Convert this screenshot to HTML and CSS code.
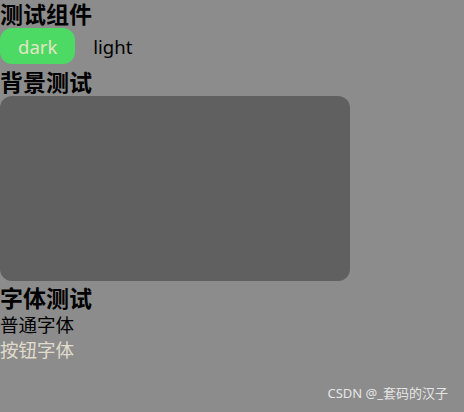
FILE: index.html
```html
<!DOCTYPE html>
<html lang="zh-CN">
  <head>
    <meta charset="UTF-8" />
    <meta name="viewport" content="width=device-width, initial-scale=1.0" />
    <title>主题测试</title>
    <link rel="stylesheet" href="styles.css">
  </head>
  <body>
    <div class="page">
      <h3 class="title">测试组件</h3>
      <div class="switch">
        <button class="btn active">dark</button>
        <button class="btn">light</button>
      </div>

      <h3 class="title">背景测试</h3>
      <div class="panel"></div>

      <h3 class="title font-title">字体测试</h3>
      <p class="text">普通字体</p>
      <p class="text btn-text">按钮字体</p>
    </div>
    <span class="mark">CSDN @_套码的汉子</span>
  </body>
</html>
```

FILE: styles.css
```css
* {
  margin: 0;
  padding: 0;
  box-sizing: border-box;
  font-family: "Noto Sans", "Noto Sans CJK SC", sans-serif;
}
body {
  min-height: 100vh;
  background-color: #8c8c8c;
  position: relative;
}
.title {
  font-size: 23px;
  font-weight: bold;
  line-height: 28px;
  color: #000;
}
.switch {
  display: flex;
  align-items: flex-start;
  height: 40px;
}
.btn {
  height: 36px;
  padding: 0 18px;
  border: none;
  border-radius: 12px;
  background: transparent;
  font-size: 18.5px;
  color: #000;
  cursor: pointer;
}
.btn.active {
  background-color: #4cd964;
  color: #e4e6c4;
}
.panel {
  width: 350px;
  height: 185px;
  border-radius: 12px;
  background-color: #606060;
}
.font-title {
  margin-top: 3px;
}
.text {
  font-size: 18.5px;
  line-height: 25px;
  color: #000;
}
.btn-text {
  color: #e0dccb;
}
.mark {
  position: absolute;
  right: 16px;
  bottom: 10px;
  font-size: 13px;
  color: rgba(255, 255, 255, 0.8);
}
```
